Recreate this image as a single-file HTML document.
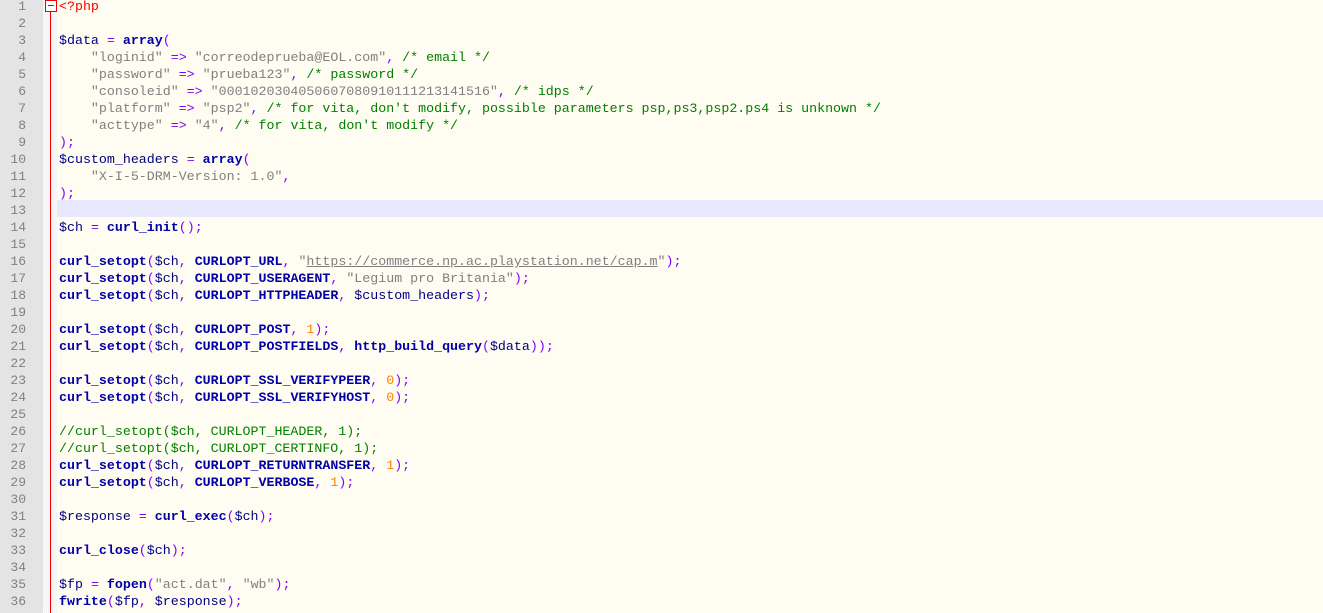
<!DOCTYPE html>
<html><head><meta charset="utf-8"><style>
html,body{margin:0;padding:0;width:1323px;height:613px;overflow:hidden;background:#fffcf2;}
body{font-family:"Liberation Mono","Courier New",monospace;font-size:13.3px;}
.gut{position:absolute;left:0;top:0;width:43px;height:613px;background:#e4e4e4;}
.fold{position:absolute;left:43px;top:0;width:14px;height:613px;background:#f3f3f3;
background-image:repeating-conic-gradient(#f0f0f0 0 25%,#fdfdfd 0 50%);background-size:2px 2px;}
.rl{position:absolute;left:50px;top:11px;width:1px;height:602px;background:#e00;}
.box{position:absolute;left:45px;top:0;width:10px;height:10px;border:1px solid #e00;background:#fff;}
.box:after{content:"";position:absolute;left:2px;top:4px;width:6px;height:1px;background:#e00;}
.cur{position:absolute;left:57px;top:200px;width:1266px;height:17px;background:#e8e8ff;}
.nums{position:absolute;left:0;top:-2px;width:26px;text-align:right;color:#808080;font-size:13px;line-height:17px;white-space:pre;}
.code{position:absolute;left:59px;top:-2px;line-height:17px;white-space:pre;color:#000;}
.k{color:#0000a8;font-weight:bold}
.v{color:#000080}
.o{color:#8000ff}
.s{color:#808080}
.c{color:#008000}
.n{color:#ff8000}
.t{color:#ff0000}
.u{text-decoration:underline}
</style></head><body>
<div class="gut"></div><div class="fold"></div><div class="cur"></div><div class="rl"></div><div class="box"></div>
<div class="nums">1
2
3
4
5
6
7
8
9
10
11
12
13
14
15
16
17
18
19
20
21
22
23
24
25
26
27
28
29
30
31
32
33
34
35
36</div>
<div class="code"><span class="t">&lt;?php</span>

<span class="v">$data</span> <span class="o">=</span> <span class="k">array</span><span class="o">(</span>
    <span class="s">"loginid"</span> <span class="o">=&gt;</span> <span class="s">"correodeprueba@EOL.com"</span><span class="o">,</span> <span class="c">/* email */</span>
    <span class="s">"password"</span> <span class="o">=&gt;</span> <span class="s">"prueba123"</span><span class="o">,</span> <span class="c">/* password */</span>
    <span class="s">"consoleid"</span> <span class="o">=&gt;</span> <span class="s">"0001020304050607080910111213141516"</span><span class="o">,</span> <span class="c">/* idps */</span>
    <span class="s">"platform"</span> <span class="o">=&gt;</span> <span class="s">"psp2"</span><span class="o">,</span> <span class="c">/* for vita, don't modify, possible parameters psp,ps3,psp2.ps4 is unknown */</span>
    <span class="s">"acttype"</span> <span class="o">=&gt;</span> <span class="s">"4"</span><span class="o">,</span> <span class="c">/* for vita, don't modify */</span>
<span class="o">);</span>
<span class="v">$custom_headers</span> <span class="o">=</span> <span class="k">array</span><span class="o">(</span>
    <span class="s">"X-I-5-DRM-Version: 1.0"</span><span class="o">,</span>
<span class="o">);</span>

<span class="v">$ch</span> <span class="o">=</span> <span class="k">curl_init</span><span class="o">();</span>

<span class="k">curl_setopt</span><span class="o">(</span><span class="v">$ch</span><span class="o">,</span> <span class="k">CURLOPT_URL</span><span class="o">,</span> <span class="s">"<span class="u">https://commerce.np.ac.playstation.net/cap.m</span>"</span><span class="o">);</span>
<span class="k">curl_setopt</span><span class="o">(</span><span class="v">$ch</span><span class="o">,</span> <span class="k">CURLOPT_USERAGENT</span><span class="o">,</span> <span class="s">"Legium pro Britania"</span><span class="o">);</span>
<span class="k">curl_setopt</span><span class="o">(</span><span class="v">$ch</span><span class="o">,</span> <span class="k">CURLOPT_HTTPHEADER</span><span class="o">,</span> <span class="v">$custom_headers</span><span class="o">);</span>

<span class="k">curl_setopt</span><span class="o">(</span><span class="v">$ch</span><span class="o">,</span> <span class="k">CURLOPT_POST</span><span class="o">,</span> <span class="n">1</span><span class="o">);</span>
<span class="k">curl_setopt</span><span class="o">(</span><span class="v">$ch</span><span class="o">,</span> <span class="k">CURLOPT_POSTFIELDS</span><span class="o">,</span> <span class="k">http_build_query</span><span class="o">(</span><span class="v">$data</span><span class="o">));</span>

<span class="k">curl_setopt</span><span class="o">(</span><span class="v">$ch</span><span class="o">,</span> <span class="k">CURLOPT_SSL_VERIFYPEER</span><span class="o">,</span> <span class="n">0</span><span class="o">);</span>
<span class="k">curl_setopt</span><span class="o">(</span><span class="v">$ch</span><span class="o">,</span> <span class="k">CURLOPT_SSL_VERIFYHOST</span><span class="o">,</span> <span class="n">0</span><span class="o">);</span>

<span class="c">//curl_setopt($ch, CURLOPT_HEADER, 1);</span>
<span class="c">//curl_setopt($ch, CURLOPT_CERTINFO, 1);</span>
<span class="k">curl_setopt</span><span class="o">(</span><span class="v">$ch</span><span class="o">,</span> <span class="k">CURLOPT_RETURNTRANSFER</span><span class="o">,</span> <span class="n">1</span><span class="o">);</span>
<span class="k">curl_setopt</span><span class="o">(</span><span class="v">$ch</span><span class="o">,</span> <span class="k">CURLOPT_VERBOSE</span><span class="o">,</span> <span class="n">1</span><span class="o">);</span>

<span class="v">$response</span> <span class="o">=</span> <span class="k">curl_exec</span><span class="o">(</span><span class="v">$ch</span><span class="o">);</span>

<span class="k">curl_close</span><span class="o">(</span><span class="v">$ch</span><span class="o">);</span>

<span class="v">$fp</span> <span class="o">=</span> <span class="k">fopen</span><span class="o">(</span><span class="s">"act.dat"</span><span class="o">,</span> <span class="s">"wb"</span><span class="o">);</span>
<span class="k">fwrite</span><span class="o">(</span><span class="v">$fp</span><span class="o">,</span> <span class="v">$response</span><span class="o">);</span></div>
</body></html>
